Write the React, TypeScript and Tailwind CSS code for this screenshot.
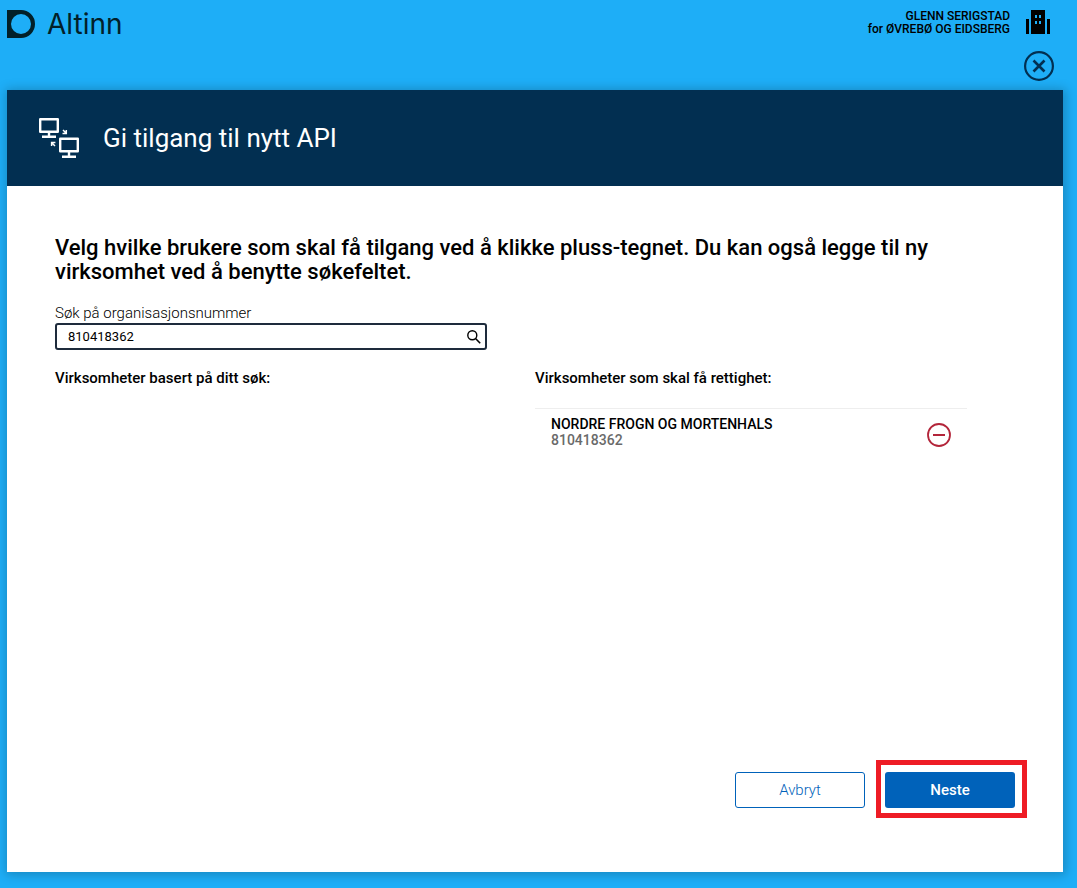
import React from "react";

function AltinnMark() {
  return (
    <svg width="28" height="28" viewBox="0 0 28 28" aria-hidden="true">
      <path fillRule="evenodd" fill="#022029" d="M0 0h14a14 14 0 0 1 0 28H0ZM14 4a10 10 0 1 0 0 20a10 10 0 0 0 0-20Z" />
    </svg>
  );
}

function BuildingIcon() {
  return (
    <svg width="24" height="24" viewBox="0 0 24 24" aria-hidden="true">
      <path fillRule="evenodd" fill="#000" d="M5 0h14v24H5ZM9 5v3h2V5ZM13 5v3h2V5ZM9 11v3h2v-3ZM13 11v3h2v-3Z" />
      <path fill="#000" d="M0 9h3v15H0ZM21 9h3v15h-3Z" />
    </svg>
  );
}

function CloseIcon() {
  return (
    <svg width="30" height="30" viewBox="0 0 30 30" fill="none" stroke="#022f51" aria-hidden="true">
      <circle cx="15" cy="15" r="13.9" strokeWidth="2.2" />
      <path d="M9.5 9.5l11 11M20.5 9.5l-11 11" strokeWidth="2.6" />
    </svg>
  );
}

function ComputersIcon() {
  return (
    <svg width="40" height="40" viewBox="0 0 40 40" fill="none" stroke="#fff" aria-hidden="true">
      <g strokeWidth="2.4" strokeLinejoin="round">
        <path d="M1.2 1.2h17.6v12.6H1.2ZM10 14v4M3 18.8h14" />
        <path d="M21.2 20.7h17.6v12.6H21.2ZM30 33.5v4M23 38.8h14" />
      </g>
      <path strokeWidth="1.5" d="M24 12l3 3M27.3 12v3.6H23.5M16 28l-3-3M12.6 28v-3.6h3.8" />
    </svg>
  );
}

function SearchIcon() {
  return (
    <svg width="14" height="14" viewBox="0 0 14 14" fill="none" stroke="#000" aria-hidden="true">
      <circle cx="5.3" cy="5.3" r="4.5" strokeWidth="1.4" />
      <path d="M8.5 8.5l4.7 4.7" strokeWidth="1.6" />
    </svg>
  );
}

function MinusIcon() {
  return (
    <svg width="24" height="24" viewBox="0 0 24 24" fill="none" stroke="#b3253a" aria-hidden="true">
      <circle cx="12" cy="12" r="11" strokeWidth="1.8" />
      <path d="M6 12h12" strokeWidth="2" />
    </svg>
  );
}

export default function App() {
  return (
    <div className="flex min-h-screen flex-col bg-[#1eaef7] pb-4 pl-[7px] pr-3.5 font-['Roboto','Liberation_Sans',sans-serif] text-black">
      <header className="flex items-start justify-between pr-3 pt-2.5">
        <a href="#" className="flex items-center gap-3 text-[#022029]">
          <AltinnMark />
          <span className="font-['Inter',sans-serif] text-[28px] leading-7">Altinn</span>
        </a>
        <div className="flex items-start gap-4 pr-px">
          <p className="text-right text-xs font-medium leading-[13px]">
            GLENN SERIGSTAD
            <br />
            for ØVREBØ OG EIDSBERG
          </p>
          <BuildingIcon />
        </div>
      </header>
      <div className="flex justify-end pb-[9px] pr-[9px] pt-[13px]">
        <button type="button" aria-label="Lukk" className="cursor-pointer">
          <CloseIcon />
        </button>
      </div>

      <main className="flex grow flex-col bg-white shadow-[1px_1px_10px_2px_rgba(0,0,0,0.22)]">
        <div className="flex h-24 items-center gap-6 bg-[#022f51] px-8 text-white">
          <ComputersIcon />
          <h1 className="text-[26px] leading-8">Gi tilgang til nytt API</h1>
        </div>

        <div className="flex grow flex-col px-12 pb-16 pt-[50px]">
          <h2 className="text-[22px] font-medium leading-6">
            Velg hvilke brukere som skal få tilgang ved å klikke pluss-tegnet. Du kan også legge til ny virksomhet ved å
            benytte søkefeltet.
          </h2>

          <div className="mr-12 mt-5 grid grid-cols-2 gap-x-12">
            <div>
              <label htmlFor="orgnr" className="block text-[15px] font-light leading-[19px]">
                Søk på organisasjonsnummer
              </label>
              <div className="flex h-[27px] items-center rounded-[3px] border-2 border-[#1e2b3c] pl-[11px] pr-1">
                <input
                  id="orgnr"
                  type="text"
                  defaultValue="810418362"
                  className="min-w-0 grow bg-transparent text-[13px] leading-4 outline-none"
                />
                <button type="button" aria-label="Søk">
                  <SearchIcon />
                </button>
              </div>
            </div>
          </div>

          <div className="mr-12 mt-[18px] grid grid-cols-2 gap-x-12">
            <section>
              <h3 className="text-[15px] font-medium leading-5">Virksomheter basert på ditt søk:</h3>
            </section>
            <section>
              <h3 className="text-[15px] font-medium leading-5">Virksomheter som skal få rettighet:</h3>
              <ul className="mt-5 border-t border-[#eeeeee]">
                <li className="flex items-center justify-between px-4 pt-[7px]">
                  <div className="text-sm font-medium leading-4">
                    <p>NORDRE FROGN OG MORTENHALS</p>
                    <p className="text-[#6a6a6a]">810418362</p>
                  </div>
                  <button type="button" aria-label="Fjern NORDRE FROGN OG MORTENHALS" className="mt-1.5 cursor-pointer">
                    <MinusIcon />
                  </button>
                </li>
              </ul>
            </section>
          </div>

          <div className="mt-auto flex justify-end gap-5">
            <button
              type="button"
              className="h-9 w-[130px] cursor-pointer rounded-[3px] border border-[#0062ba] text-[15px] font-light text-[#0062ba]"
            >
              Avbryt
            </button>
            <div className="relative">
              <button
                type="button"
                className="block h-9 w-[130px] cursor-pointer rounded-[3px] bg-[#0062ba] text-[15px] font-medium text-white"
              >
                Neste
              </button>
              <div className="pointer-events-none absolute -bottom-2.5 -left-[9px] -right-3 -top-3 border-5 border-[#ee1c25]" />
            </div>
          </div>
        </div>
      </main>
    </div>
  );
}
